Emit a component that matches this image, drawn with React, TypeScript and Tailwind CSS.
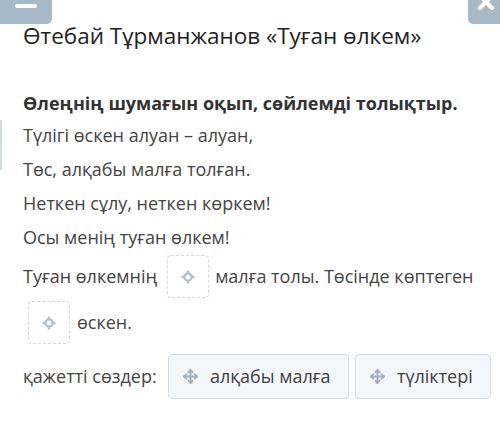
import React from 'react';

const MoveIcon = ({ size = 17, color = '#9fb1bd' }: { size?: number; color?: string }) => (
  <svg width={size} height={size} viewBox="0 0 24 24" fill="none" stroke={color} strokeWidth={2.8} strokeLinecap="round" strokeLinejoin="round">
    <path d="M12 3v18M3 12h18" />
    <path d="M9 6l3-3 3 3M9 18l3 3 3-3M6 9l-3 3 3 3M18 9l3 3-3 3" />
  </svg>
);

// small grey target shown in an empty slot
const DropIcon = () => (
  <svg width={16} height={16} viewBox="0 0 16 16">
    <circle cx="8" cy="8" r="3.6" fill="none" stroke="#aebbc4" strokeWidth="2.2" />
    <path d="M8 1l2 2.6H6zM8 15l2-2.6H6zM1 8l2.6-2v4zM15 8l-2.6-2v4z" fill="#aebbc4" />
  </svg>
);

const DropSlot = () => (
  <span className="inline-flex w-[42px] h-[43px] items-center justify-center rounded-[4px] border border-dashed border-[#d4d8dc] bg-white">
    <DropIcon />
  </span>
);

const Chip = ({ label, w }: { label: string; w: string }) => (
  <div className={`flex shrink-0 items-center gap-[11px] h-[45px] ${w} pl-[13px] rounded-[4px] border border-[#d3dce3] bg-[#f3f7fa] text-[#3f3f3f] whitespace-nowrap`}>
    <MoveIcon />
    <span>{label}</span>
  </div>
);

const poem = [
  'Түлігі өскен алуан – алуан,',
  'Төс, алқабы малға толған.',
  'Неткен сұлу, неткен көркем!',
  'Осы менің туған өлкем!',
];

export default function App() {
  return (
    <div className="w-[500px] h-[427px] bg-white overflow-hidden relative text-[#3a3a3a]" style={{ fontFamily: '"Open Sans", "Noto Sans", sans-serif' }}>
      {/* top toolbar */}
      <div className="flex justify-between h-6">
        <div className="w-[52px] h-6 bg-[#a8bac6] rounded-br-[5px] flex items-start pl-[15px] pt-[4px]">
          <div className="w-[22px] h-[4px] bg-white rounded-sm" />
        </div>
        <div className="w-[32px] h-6 bg-[#a8bac6] rounded-bl-[5px] relative overflow-hidden">
          <svg className="absolute left-[8px] -top-[6px]" width="22" height="18" viewBox="0 0 22 18" stroke="white" strokeWidth="4" strokeLinecap="round">
            <path d="M4 2l12 12M16 2L4 14" />
          </svg>
        </div>
      </div>

      <div className="absolute left-0 top-[120px] h-[50px] w-[2px] bg-[#d3ddd7]" />

      <h1 className="px-[23px] -mt-[2px] text-[22.5px] leading-[28px] text-[#222]">
        Өтебай Тұрманжанов «Туған өлкем»
      </h1>

      <div className="px-[23px] mt-[40px] text-[18px]">
        <p className="font-bold text-[#333] leading-[26px] whitespace-nowrap">Өлеңнің шумағын оқып, сөйлемді толықтыр.</p>
        <div className="mt-[2px] text-[#444]">
          {poem.map(line => (
            <p key={line} className="leading-[34px]">{line}</p>
          ))}
        </div>

        <div className="mt-[1px] text-[#444] leading-[43px] whitespace-nowrap">
          <div className="flex items-center">
            <span>Туған өлкемнің</span>
            <span className="ml-[10px] mr-[6px] flex"><DropSlot /></span>
            <span>малға толы. Төсінде көптеген</span>
          </div>
          <div className="flex items-center mt-[3px]">
            <span className="ml-[5px] mr-[7px] flex"><DropSlot /></span>
            <span>өскен.</span>
          </div>
        </div>

        <div className="flex items-center mt-[10px] text-[#444]">
          <span className="w-[145px] shrink-0 whitespace-nowrap">қажетті сөздер:</span>
          <div className="flex gap-[6px]">
            <Chip label="алқабы малға" w="w-[181px]" />
            <Chip label="түліктері" w="w-[136px]" />
          </div>
        </div>
      </div>
    </div>
  );
}
